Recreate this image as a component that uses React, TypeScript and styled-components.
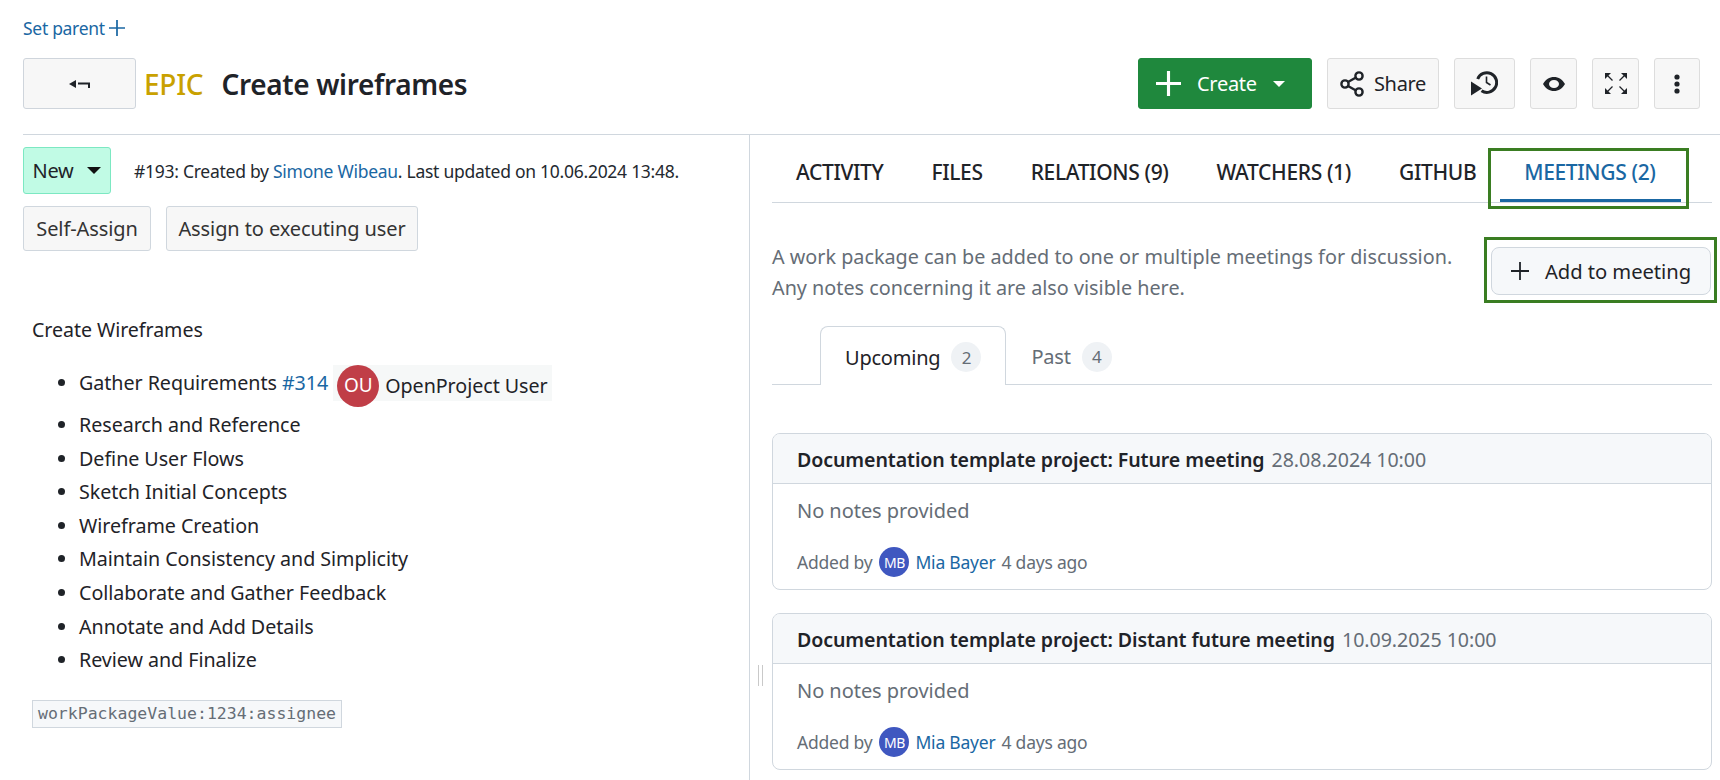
import { createGlobalStyle, styled } from 'styled-components';

const GlobalStyle = createGlobalStyle`
  html, body {
    margin: 0;
    padding: 0;
    background: #fff;
    overflow: hidden;
  }
  body {
    font-family: "Noto Sans", "Open Sans", sans-serif;
    font-size: 20px;
    letter-spacing: -0.05px;
    color: #1f2328;
  }
  * { box-sizing: border-box; }
`;

const Page = styled.div`
  width: 1720px;
  height: 780px;
  display: flex;
  flex-direction: column;
  overflow: hidden;
`;

const SetParent = styled.a`
  display: flex;
  align-items: center;
  gap: 4px;
  height: 28px;
  margin: 14px 0 16px 23px;
  font-size: 17.5px;
  letter-spacing: -0.3px;
  color: #1a67a3;
`;

const Toolbar = styled.div`
  display: flex;
  align-items: center;
  height: 51px;
  margin: 0 20px 25px 23px;
`;

const BaseButton = styled.button`
  display: inline-flex;
  align-items: center;
  justify-content: center;
  font: inherit;
  letter-spacing: inherit;
  height: 51px;
  padding: 0;
  color: #1f2328;
  background: #f7f7f7;
  border: 1px solid #dddddd;
  border-radius: 3px;
`;

const BackButton = styled(BaseButton)`
  width: 113px;
  border-color: #cfd5dc;
`;

const TypeLabel = styled.span`
  margin-left: 8px;
  font-size: 28px;
  font-weight: 500;
  letter-spacing: -0.25px;
  color: #c9a100;
`;

const Subject = styled.h1`
  margin: 0 0 0 18px;
  font-size: 28px;
  font-weight: 600;
  letter-spacing: -0.35px;
`;

const ToolbarActions = styled.div`
  display: flex;
  gap: 15px;
  margin-left: auto;
  letter-spacing: -0.3px;
`;

const CreateButton = styled(BaseButton)`
  justify-content: flex-start;
  width: 174px;
  padding-left: 17px;
  color: #fff;
  background: #1f883d;
  border-color: #1f883d;
`;

const CreateLabel = styled.span`
  margin: 0 16px 0 16px;
`;

const IconButton = styled(BaseButton)<{ $width: number }>`
  width: ${({ $width }) => $width}px;
  gap: 10px;
`;

const Split = styled.div`
  flex: 1;
  display: grid;
  grid-template-columns: 750px 1fr;
`;

const LeftPane = styled.section`
  position: relative;
  padding: 13px 0 0 23px;
  border-right: 1px solid #d0d7de;
  &::before {
    content: '';
    position: absolute;
    top: 0;
    left: 23px;
    right: 0;
    height: 1px;
    background: #d0d7de;
  }
`;

const RightPane = styled.section`
  position: relative;
  padding-left: 22px;
  padding-right: 8px;
  border-top: 1px solid #d0d7de;
`;

const ResizeHandle = styled.span`
  position: absolute;
  left: 8px;
  top: 530px;
  width: 5px;
  height: 21px;
  border-left: 1px solid #c9c9c9;
  border-right: 1px solid #c9c9c9;
`;

const StatusRow = styled.div`
  display: flex;
  align-items: center;
  gap: 23px;
`;

const StatusButton = styled(BaseButton)`
  width: 88px;
  height: 47px;
  gap: 14px;
  letter-spacing: -0.3px;
  background: #c1fbe5;
  border-color: #7ce8c2;
`;

const Meta = styled.p`
  margin: 0;
  font-size: 17.5px;
  letter-spacing: -0.27px;
  color: #24292f;
`;

const Link = styled.a`
  color: #1a67a3;
`;

const AssignRow = styled.div`
  display: flex;
  gap: 15px;
  margin-top: 12px;
`;

const AssignButton = styled(BaseButton)<{ $width: number }>`
  width: ${({ $width }) => $width}px;
  height: 45px;
  letter-spacing: -0.1px;
  color: #333;
  border-color: #d0d7de;
`;

const Description = styled.div`
  margin: 64px 0 0 9px;
`;

const Intro = styled.p`
  margin: 0;
  height: 30px;
  line-height: 30px;
  font-size: 19.6px;
`;

const BulletList = styled.ul`
  margin: 21px 0 0;
  padding: 0 0 0 47px;
  font-size: 19.7px;
`;

const Bullet = styled.li<{ $tall?: boolean }>`
  height: ${({ $tall }) => ($tall ? '42px' : '33.6px')};
  line-height: 33.6px;
  &::marker {
    font-size: 20px;
  }
`;

const Mention = styled.span`
  display: inline-flex;
  align-items: flex-start;
  vertical-align: top;
  height: 36px;
  margin: -1px 0 0 5px;
  padding: 0 4px;
  background: #f6f8f8;
`;

const Avatar = styled.span<{ $color: string; $size: number }>`
  display: inline-flex;
  align-items: center;
  justify-content: center;
  flex: none;
  width: ${({ $size }) => $size}px;
  height: ${({ $size }) => $size}px;
  border-radius: 50%;
  color: #fff;
  background: ${({ $color }) => $color};
`;

const MentionAvatar = styled(Avatar)`
  font-size: 19px;
`;

const MentionName = styled.span`
  margin-left: 6px;
  line-height: 42px;
`;

const CodeChip = styled.code`
  display: inline-block;
  margin-top: 23px;
  padding: 0 5px;
  height: 28px;
  line-height: 26px;
  font-family: "DejaVu Sans Mono", monospace;
  font-size: 16.5px;
  letter-spacing: 0;
  color: #656d76;
  background: #f6f8fa;
  border: 1px solid #d0d7de;
`;

const Tabs = styled.nav`
  display: flex;
  height: 68px;
  padding-left: 24px;
  font-size: 21px;
  font-weight: 500;
  letter-spacing: -0.36px;
  border-bottom: 1px solid #d0d7de;
`;

const Tab = styled.a<{ $active?: boolean; $left: number }>`
  position: relative;
  margin-left: ${({ $left }) => $left}px;
  line-height: 74px;
  color: ${({ $active }) => ($active ? '#1a67a3' : '#1f2328')};
  white-space: nowrap;
`;

const HighlightBox = styled.span`
  position: absolute;
  pointer-events: none;
  border: 3px solid #3a7d22;
`;

const TabUnderline = styled.span`
  position: absolute;
  left: -24px;
  right: -25px;
  bottom: 0;
  height: 3px;
  background: #1a67a3;
`;

const TabHighlight = styled(HighlightBox)`
  top: 13px;
  left: -36px;
  right: -33px;
  bottom: -7px;
`;

const IntroRow = styled.div`
  display: flex;
  justify-content: space-between;
  align-items: flex-start;
  margin-top: 38px;
`;

const HelpText = styled.p`
  margin: 0;
  font-size: 19.8px;
  line-height: 31px;
  letter-spacing: 0;
  color: #656d76;
`;

const AddWrap = styled.div`
  position: relative;
  margin-top: 6px;
  margin-right: 1px;
`;

const AddButton = styled(BaseButton)`
  width: 220px;
  height: 48px;
  gap: 16px;
  font-size: 20.2px;
  background: #f6f8fa;
  border: 1px solid #d0d7de;
  border-radius: 8px;
`;

const AddHighlight = styled(HighlightBox)`
  top: -10px;
  bottom: -8px;
  left: -7px;
  right: -6px;
`;

const SubTabs = styled.div`
  display: flex;
  align-items: flex-end;
  height: 59px;
  margin-top: 23px;
  padding-left: 48px;
  letter-spacing: -0.22px;
  border-bottom: 1px solid #d0d7de;
`;

const SubTab = styled.div<{ $active?: boolean }>`
  display: flex;
  align-items: center;
  gap: 11px;
  height: ${({ $active }) => ($active ? '59px' : '58px')};
  margin-bottom: ${({ $active }) => ($active ? '-1px' : '0')};
  padding: 2px 24px 0;
  color: ${({ $active }) => ($active ? '#1f2328' : '#656d76')};
  background: #fff;
  border: 1px solid ${({ $active }) => ($active ? '#d0d7de' : 'transparent')};
  border-bottom: none;
  border-radius: 8px 8px 0 0;
`;

const Counter = styled.span`
  display: inline-flex;
  align-items: center;
  justify-content: center;
  width: 30px;
  height: 30px;
  font-size: 17px;
  color: #656d76;
  background: #eff2f5;
  border-radius: 50%;
`;

const Cards = styled.div`
  display: flex;
  flex-direction: column;
  gap: 23px;
  margin-top: 48px;
`;

const Card = styled.article`
  height: 157px;
  border: 1px solid #d0d7de;
  border-radius: 8px;
  overflow: hidden;
`;

const CardHeader = styled.div`
  height: 50px;
  padding-left: 24px;
  line-height: 51px;
  font-size: 19.6px;
  background: #f6f8fa;
  border-bottom: 1px solid #d0d7de;
`;

const CardTitle = styled.strong`
  font-weight: 600;
  letter-spacing: -0.1px;
`;

const CardDate = styled.span`
  margin-left: 2px;
  color: #656d76;
`;

const CardBody = styled.div`
  padding: 12px 24px 0;
  color: #656d76;
`;

const Notes = styled.p`
  margin: 0;
  line-height: 30px;
`;

const AddedBy = styled.div`
  display: flex;
  align-items: center;
  gap: 6px;
  margin-top: 21px;
  font-size: 17.5px;
  letter-spacing: -0.22px;
`;

const CardAvatar = styled(Avatar)`
  margin-left: 1px;
  font-size: 14px;
  letter-spacing: -0.5px;
`;

const Plus = ({ size, color, weight }: { size: number; color: string; weight: number }) => (
  <svg width={size} height={size} viewBox="0 0 24 24">
    <path d="M12 0v24M0 12h24" stroke={color} strokeWidth={weight} fill="none" />
  </svg>
);

const Caret = ({ color, width, height }: { color: string; width: number; height: number }) => (
  <svg width={width} height={height} viewBox="0 0 14 8" preserveAspectRatio="none">
    <path d="M0 0h14L7 8z" fill={color} />
  </svg>
);

const BackIcon = () => (
  <svg width="21" height="8" viewBox="0 0 21 8" fill="#1f2328">
    <path d="M0 4l7-4v8z" />
    <path d="M9 2.500h12V8h-2V4.500H9z" />
  </svg>
);

const ShareIcon = () => (
  <svg width="24" height="26" viewBox="0 0 24 26" fill="none" stroke="#1f2328" strokeWidth="2.400">
    <circle cx="5" cy="13" r="3.600" />
    <circle cx="19" cy="5" r="3.600" />
    <circle cx="19" cy="21" r="3.600" />
    <path d="M8 11l8-4.500M8 15l8 4.500" />
  </svg>
);

const HistoryIcon = () => (
  <svg width="27" height="25" viewBox="0 0 27 25" fill="none">
    <path d="M6.700 8A9.800 9.800 0 1 1 10.500 19.800" stroke="#1f2328" strokeWidth="3" />
    <path d="M15.500 5.500v6l4 2.500" stroke="#1f2328" strokeWidth="1.600" />
    <path d="M0 10.500l11 7-11 7z" fill="#1f2328" />
  </svg>
);

const EyeIcon = () => (
  <svg width="22" height="14" viewBox="0 0 22 14">
    <path fillRule="evenodd" fill="#1f2328" d="M0 7C2.500 2.500 6.500 0 11 0s8.500 2.500 11 7c-2.500 4.500-6.500 7-11 7S2.500 11.500 0 7zM11 3C8 3 6 5 6 7s2 4 5 4 5-2 5-4-2-4-5-4z" />
  </svg>
);

const ExpandIcon = () => (
  <svg width="22" height="21" viewBox="0 0 22 21" fill="#1f2328" stroke="none">
    <path d="M0 0h6L0 6z" />
    <path d="M22 0h-6l6 6z" />
    <path d="M0 21h6l-6-6z" />
    <path d="M22 21h-6l6-6z" />
    <path d="M2 2l5.500 5.500M20 2l-5.500 5.500M2 19l5.500-5.500M20 19l-5.500-5.500" stroke="#1f2328" strokeWidth="1.300" />
  </svg>
);

const MoreIcon = () => (
  <svg width="6" height="20" viewBox="0 0 6 20" fill="#1f2328">
    <circle cx="3" cy="3" r="2.600" />
    <circle cx="3" cy="10" r="2.600" />
    <circle cx="3" cy="17" r="2.600" />
  </svg>
);

const bullets = [
  'Research and Reference',
  'Define User Flows',
  'Sketch Initial Concepts',
  'Wireframe Creation',
  'Maintain Consistency and Simplicity',
  'Collaborate and Gather Feedback',
  'Annotate and Add Details',
  'Review and Finalize',
];

const meetings = [
  { title: 'Documentation template project: Future meeting', date: '28.08.2024 10:00' },
  { title: 'Documentation template project: Distant future meeting', date: '10.09.2025 10:00' },
];

export default function App() {
  return (
    <Page>
      <GlobalStyle />
      <SetParent>
        Set parent <Plus size={16} color="#1a67a3" weight={2.600} />
      </SetParent>
      <Toolbar>
        <BackButton aria-label="Back"><BackIcon /></BackButton>
        <TypeLabel>EPIC</TypeLabel>
        <Subject>Create wireframes</Subject>
        <ToolbarActions>
          <CreateButton>
            <Plus size={25} color="#fff" weight={3} />
            <CreateLabel>Create</CreateLabel>
            <Caret color="#fff" width={12} height={6} />
          </CreateButton>
          <IconButton $width={112}><ShareIcon /> Share</IconButton>
          <IconButton $width={61}><HistoryIcon /></IconButton>
          <IconButton $width={47}><EyeIcon /></IconButton>
          <IconButton $width={47}><ExpandIcon /></IconButton>
          <IconButton $width={46}><MoreIcon /></IconButton>
        </ToolbarActions>
      </Toolbar>
      <Split>
        <LeftPane>
          <StatusRow>
            <StatusButton>New <Caret color="#111" width={14} height={7} /></StatusButton>
            <Meta>
              #193: Created by <Link>Simone Wibeau</Link>. Last updated on 10.06.2024 13:48.
            </Meta>
          </StatusRow>
          <AssignRow>
            <AssignButton $width={128}>Self-Assign</AssignButton>
            <AssignButton $width={252}>Assign to executing user</AssignButton>
          </AssignRow>
          <Description>
            <Intro>Create Wireframes</Intro>
            <BulletList>
              <Bullet $tall>
                Gather Requirements <Link>#314</Link>
                <Mention>
                  <MentionAvatar $color="#c03e47" $size={42}>OU</MentionAvatar>
                  <MentionName>OpenProject User</MentionName>
                </Mention>
              </Bullet>
              {bullets.map((item) => (
                <Bullet key={item}>{item}</Bullet>
              ))}
            </BulletList>
            <CodeChip>workPackageValue:1234:assignee</CodeChip>
          </Description>
        </LeftPane>
        <RightPane>
          <ResizeHandle />
          <Tabs>
            <Tab $left={0}>ACTIVITY</Tab>
            <Tab $left={48}>FILES</Tab>
            <Tab $left={48}>RELATIONS (9)</Tab>
            <Tab $left={48}>WATCHERS (1)</Tab>
            <Tab $left={48}>GITHUB</Tab>
            <Tab $left={48} $active>
              MEETINGS (2)
              <TabUnderline />
              <TabHighlight />
            </Tab>
          </Tabs>
          <IntroRow>
            <HelpText>
              A work package can be added to one or multiple meetings for discussion.
              <br />
              Any notes concerning it are also visible here.
            </HelpText>
            <AddWrap>
              <AddButton><Plus size={18} color="#1f2328" weight={2.400} /> Add to meeting</AddButton>
              <AddHighlight />
            </AddWrap>
          </IntroRow>
          <SubTabs>
            <SubTab $active>Upcoming <Counter>2</Counter></SubTab>
            <SubTab>Past <Counter>4</Counter></SubTab>
          </SubTabs>
          <Cards>
            {meetings.map((meeting) => (
              <Card key={meeting.title}>
                <CardHeader>
                  <CardTitle>{meeting.title}</CardTitle> <CardDate>{meeting.date}</CardDate>
                </CardHeader>
                <CardBody>
                  <Notes>No notes provided</Notes>
                  <AddedBy>
                    Added by
                    <CardAvatar $color="#3f57c0" $size={30}>MB</CardAvatar>
                    <Link>Mia Bayer</Link> 4 days ago
                  </AddedBy>
                </CardBody>
              </Card>
            ))}
          </Cards>
        </RightPane>
      </Split>
    </Page>
  );
}
